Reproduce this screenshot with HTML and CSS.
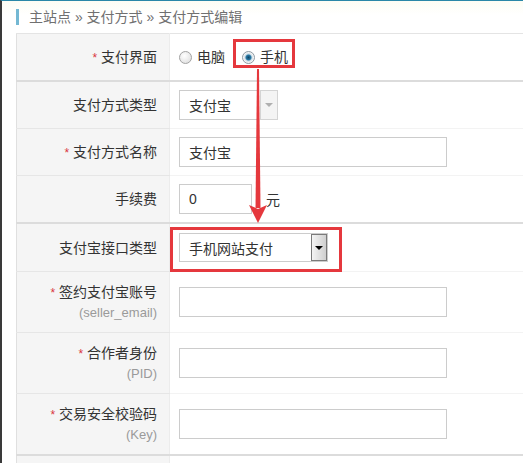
FILE: index.html
```html
<!DOCTYPE html>
<html lang="zh-CN">
<head>
    <meta charset="UTF-8">
    <title>支付方式编辑</title>
    <link rel="stylesheet" href="styles.css">
</head>
<body>
    <div class="page">
        <div class="crumbs">
            <span class="crumbs-text">主站点 » 支付方式 » 支付方式编辑</span>
        </div>

        <table class="form">
            <tr class="row sep">
                <th class="label"><em>*</em> 支付界面</th>
                <td class="value">
                    <label class="choice"><input type="radio" class="radio" name="ui"> 电脑</label>
                    <label class="choice"><input type="radio" class="radio" name="ui" checked> 手机</label>
                </td>
            </tr>
            <tr class="row">
                <th class="label">支付方式类型</th>
                <td class="value">
                    <div class="select select-off">
                        <span class="select-box">支付宝</span>
                        <span class="select-btn"></span>
                    </div>
                </td>
            </tr>
            <tr class="row">
                <th class="label"><em>*</em> 支付方式名称</th>
                <td class="value"><input type="text" class="text" value="支付宝"></td>
            </tr>
            <tr class="row sep">
                <th class="label">手续费</th>
                <td class="value"><input type="text" class="text text-short" value="0"> <span class="unit">元</span></td>
            </tr>
            <tr class="row row-mid">
                <th class="label">支付宝接口类型</th>
                <td class="value">
                    <div class="select select-on">
                        <span class="select-box">手机网站支付</span>
                        <span class="select-btn"></span>
                    </div>
                </td>
            </tr>
            <tr class="row row-tall">
                <th class="label"><em>*</em> 签约支付宝账号<small>(seller_email)</small></th>
                <td class="value"><input type="text" class="text"></td>
            </tr>
            <tr class="row row-tall">
                <th class="label"><em>*</em> 合作者身份<small>(PID)</small></th>
                <td class="value"><input type="text" class="text"></td>
            </tr>
            <tr class="row row-tall sep">
                <th class="label"><em>*</em> 交易安全校验码<small>(Key)</small></th>
                <td class="value"><input type="text" class="text"></td>
            </tr>
            <tr class="row">
                <th class="label"></th>
                <td class="value"><input type="text" class="text"></td>
            </tr>
        </table>

        <!-- marcas rojas de la captura -->
        <svg class="marks" width="523" height="463" viewBox="0 0 523 463">
            <rect x="234.5" y="40.5" width="59" height="26" fill="none" stroke="#e5383d" stroke-width="3"/>
            <rect x="171.5" y="228.5" width="169" height="42" fill="none" stroke="#e5383d" stroke-width="3"/>
            <polygon points="257,69 259,69 260.5,208 255.5,208" fill="#e5383d"/>
            <polygon points="249,205 258,209 267,205 258,223" fill="#e5383d"/>
        </svg>
    </div>
</body>
</html>
```

FILE: styles.css
```css
html, body {
    margin: 0;
    height: 100%;
    overflow: hidden;
    background: #ffffff;
}

body {
    font-family: "Liberation Sans", "Noto Sans CJK SC", sans-serif;
    font-size: 14px;
    color: #333;
}

.page {
    position: relative;
    height: 100%;
    border-top: 1px solid #2a87a8;
    border-left: 2px solid #3a3a3a;
    box-sizing: border-box;
}

/* Migas */
.crumbs {
    height: 32px;
    padding-left: 14px;
    display: flex;
    align-items: center;
    background: linear-gradient(#fdfdf4, #ffffff 14px);
}

.crumbs-text {
    border-left: 3px solid #74b8d3;
    padding-left: 10px;
    line-height: 16px;
    color: #707070;
}

/* Tabla del formulario */
.form {
    border-collapse: collapse;
    margin-left: 14px;
    width: calc(100% - 14px);
    border-top: 1px solid #e4e4e4;
    border-left: 1px solid #e0e0e0;
}

.label {
    width: 140px;
    padding: 0 12px 0 0;
    background-color: #f5f5f5;
    text-align: right;
    font-weight: normal;
    color: #333;
    border-right: 1px solid #ececec;
    border-bottom: 1px solid #e6e6e6;
    line-height: 20px;
}

.label em {
    font-style: normal;
    color: #d9363e;
    font-size: 12px;
}

.label small {
    display: block;
    font-size: 13px;
    color: #9a9a9a;
}

.value {
    padding: 0 0 0 9px;
    border-bottom: 1px solid #f3f3f3;
    white-space: nowrap;
}

.row th,
.row td {
    height: 46px;
}

.row-mid th,
.row-mid td {
    height: 47px;
}

.row-tall th,
.row-tall td {
    height: 60px;
}

.sep th,
.sep td {
    border-bottom: 2px solid #dcdcdc;
}

/* Radios */
.choice {
    display: inline-flex;
    align-items: center;
    margin-right: 13px;
    line-height: 20px;
}

.radio {
    appearance: none;
    -webkit-appearance: none;
    width: 13px;
    height: 13px;
    margin: 0 5px 0 0;
    border-radius: 50%;
    border: 1px solid #a3a3a3;
    background: radial-gradient(circle at 40% 35%, #ffffff, #dadada);
    box-sizing: border-box;
}

.radio:checked {
    border-color: #8e9aa3;
    background: radial-gradient(circle, #0f4565 0, #2a7aa6 2.5px, #c9dbe6 3.5px, #f4f4f4 5px);
}

/* Campos */
.text {
    width: 268px;
    height: 30px;
    box-sizing: border-box;
    border: 1px solid #cccccc;
    padding: 0 9px;
    font-family: inherit;
    font-size: 14px;
    color: #333;
    vertical-align: middle;
}

.text-short {
    width: 73px;
}

.unit {
    margin-left: 10px;
    vertical-align: middle;
}

.select {
    display: inline-flex;
    vertical-align: middle;
}

.select-box {
    box-sizing: border-box;
    border: 1px solid #cccccc;
    padding-left: 9px;
    display: flex;
    align-items: center;
}

.select-btn {
    box-sizing: border-box;
    position: relative;
}

.select-btn::after {
    content: "";
    position: absolute;
    left: 50%;
    top: 50%;
    border-left: 4px solid transparent;
    border-right: 4px solid transparent;
    border-top: 4px solid #000;
    transform: translate(-50%, -50%);
}

.select-off .select-box {
    width: 79px;
    height: 30px;
}

.select-off .select-btn {
    width: 18px;
    height: 30px;
    margin-left: 2px;
    border: 1px solid #d4d4d4;
    background: #f4f4f4;
}

.select-off .select-btn::after {
    border-top-color: #b0b0b0;
}

.select-on {
    position: relative;
}

.select-on .select-box {
    width: 149px;
    height: 29px;
}

.select-on .select-btn {
    position: absolute;
    right: 1px;
    top: 1px;
    width: 16px;
    height: 27px;
    border: 1px solid #7a7a7a;
    background: linear-gradient(90deg, #f4f4f4, #cfcfcf);
}

/* Anotaciones */
.marks {
    position: absolute;
    left: -2px;
    top: -1px;
    pointer-events: none;
}
```
